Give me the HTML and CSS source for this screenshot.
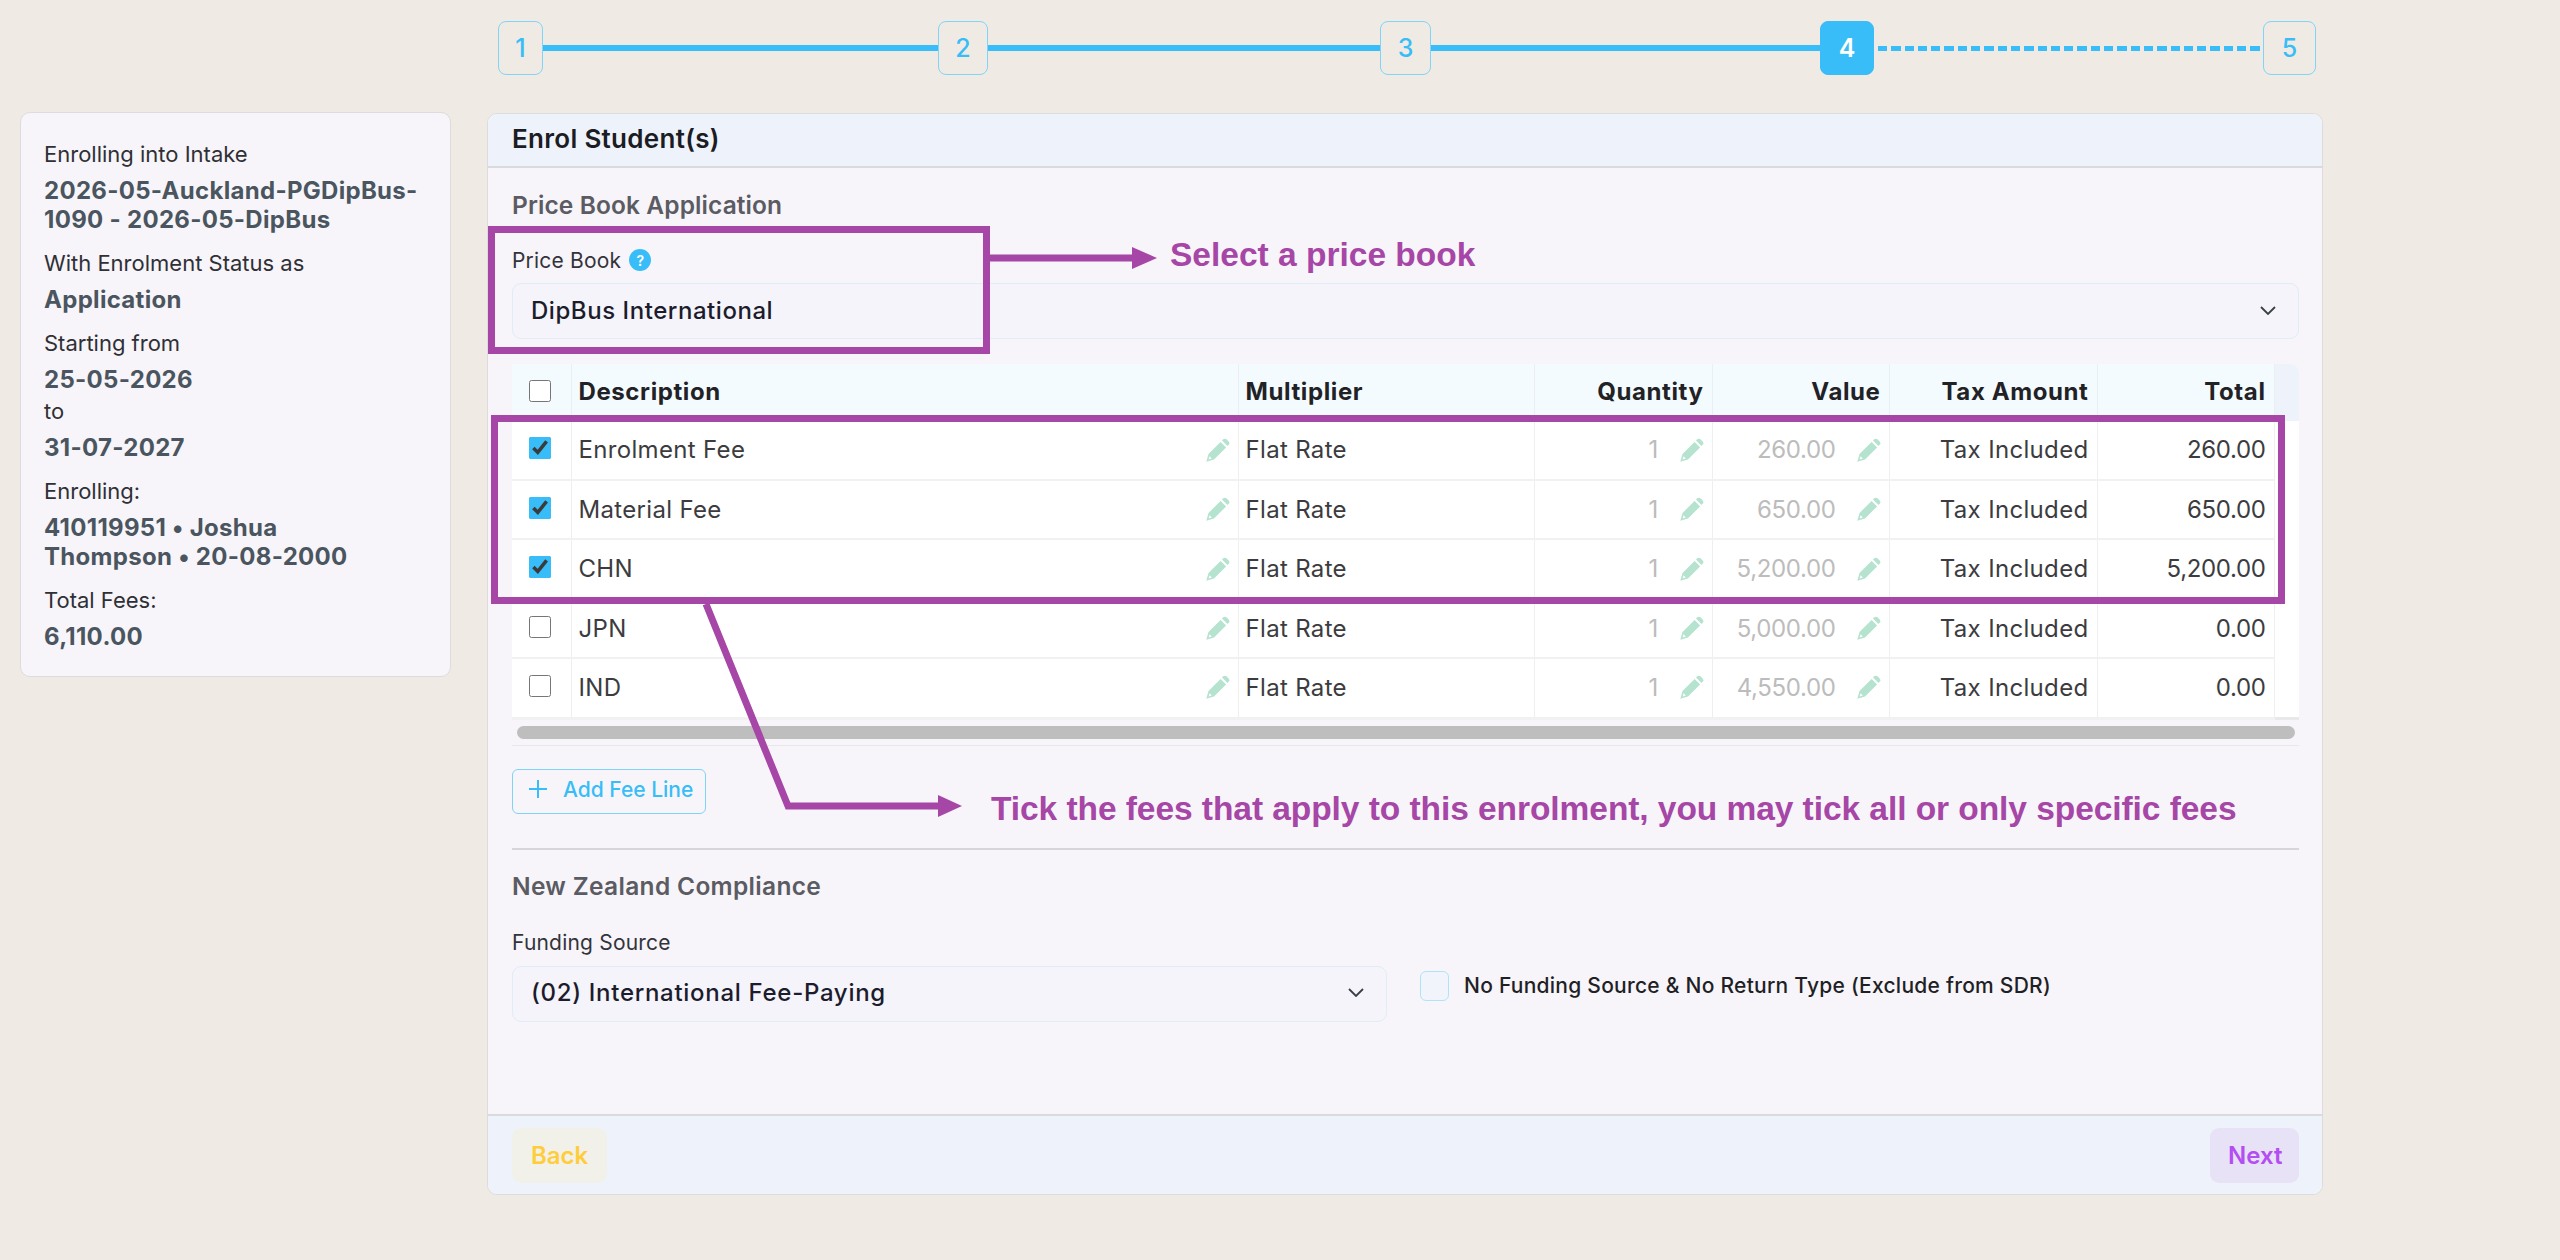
FILE: index.html
```html
<!DOCTYPE html>
<html lang="en">
<head>
<meta charset="UTF-8">
<title>Enrol Student(s)</title>
<link rel="stylesheet" href="styles.css">
</head>
<body>
    <svg class="defs" width="0" height="0">
        <symbol id="pencil" viewBox="0 0 24 24">
            <path fill-rule="evenodd" d="M14.6 3.9l5.5 5.5L8 21.5 0.3 23.7 2.5 16zM3.6 18.2l-1 3.2 3.2-1z"/>
            <path d="M16 2.5l0.9-0.9a2.8 2.8 0 0 1 3.9 0l1.6 1.6a2.8 2.8 0 0 1 0 3.9L21.5 8z"/>
        </symbol>
    </svg>

    <div class="page">
        <div class="stepper">
            <div class="step s1">1</div>
            <div class="line l1"></div>
            <div class="step s2">2</div>
            <div class="line l2"></div>
            <div class="step s3">3</div>
            <div class="line"></div>
            <div class="step active">4</div>
            <div class="line dashed"></div>
            <div class="step s5">5</div>
        </div>

        <aside class="summary">
            <p class="label">Enrolling into Intake</p>
            <p class="value">2026-05-Auckland-PGDipBus-<br>1090 - 2026-05-DipBus</p>
            <p class="label">With Enrolment Status as</p>
            <p class="value">Application</p>
            <p class="label">Starting from</p>
            <p class="value">25-05-2026</p>
            <p class="label tight">to</p>
            <p class="value">31-07-2027</p>
            <p class="label">Enrolling:</p>
            <p class="value">410119951 • Joshua<br>Thompson • 20-08-2000</p>
            <p class="label">Total Fees:</p>
            <p class="value">6,110.00</p>
        </aside>

        <main class="card">
            <div class="card-header">Enrol Student(s)</div>
            <div class="card-body">
                <h3 class="section-title">Price Book Application</h3>
                <div class="field-label first-field">Price Book <span class="help">?</span></div>
                <div class="select full">
                    <span>DipBus International</span>
                    <svg class="chevron" viewBox="0 0 16 9"><path d="M1 1l7 7 7-7"/></svg>
                </div>

                <div class="table-wrap">
                    <table class="fees">
                        <colgroup>
                            <col class="c-check"><col class="c-desc"><col class="c-mult"><col class="c-qty">
                            <col class="c-val"><col class="c-tax"><col class="c-total"><col class="c-pad">
                        </colgroup>
                        <thead>
                            <tr>
                                <th class="check"><input type="checkbox"></th>
                                <th>Description</th>
                                <th>Multiplier</th>
                                <th class="right">Quantity</th>
                                <th class="right">Value</th>
                                <th class="right">Tax Amount</th>
                                <th class="right">Total</th>
                                <th class="filler"></th>
                            </tr>
                        </thead>
                        <tbody>
                            <tr>
                                <td class="check"><input type="checkbox" checked></td>
                                <td><div class="cell">Enrolment Fee <svg class="pencil"><use href="#pencil"/></svg></div></td>
                                <td>Flat Rate</td>
                                <td><div class="cell end muted">1 <svg class="pencil"><use href="#pencil"/></svg></div></td>
                                <td><div class="cell end muted num">260.00 <svg class="pencil"><use href="#pencil"/></svg></div></td>
                                <td class="right">Tax Included</td>
                                <td class="right num">260.00</td>
                                <td class="pad"></td>
                            </tr>
                            <tr>
                                <td class="check"><input type="checkbox" checked></td>
                                <td><div class="cell">Material Fee <svg class="pencil"><use href="#pencil"/></svg></div></td>
                                <td>Flat Rate</td>
                                <td><div class="cell end muted">1 <svg class="pencil"><use href="#pencil"/></svg></div></td>
                                <td><div class="cell end muted num">650.00 <svg class="pencil"><use href="#pencil"/></svg></div></td>
                                <td class="right">Tax Included</td>
                                <td class="right num">650.00</td>
                                <td class="pad"></td>
                            </tr>
                            <tr class="tall">
                                <td class="check"><input type="checkbox" checked></td>
                                <td><div class="cell">CHN <svg class="pencil"><use href="#pencil"/></svg></div></td>
                                <td>Flat Rate</td>
                                <td><div class="cell end muted">1 <svg class="pencil"><use href="#pencil"/></svg></div></td>
                                <td><div class="cell end muted num">5,200.00 <svg class="pencil"><use href="#pencil"/></svg></div></td>
                                <td class="right">Tax Included</td>
                                <td class="right num">5,200.00</td>
                                <td class="pad"></td>
                            </tr>
                            <tr>
                                <td class="check"><input type="checkbox"></td>
                                <td><div class="cell">JPN <svg class="pencil"><use href="#pencil"/></svg></div></td>
                                <td>Flat Rate</td>
                                <td><div class="cell end muted">1 <svg class="pencil"><use href="#pencil"/></svg></div></td>
                                <td><div class="cell end muted num">5,000.00 <svg class="pencil"><use href="#pencil"/></svg></div></td>
                                <td class="right">Tax Included</td>
                                <td class="right num">0.00</td>
                                <td class="pad"></td>
                            </tr>
                            <tr class="tall">
                                <td class="check"><input type="checkbox"></td>
                                <td><div class="cell">IND <svg class="pencil"><use href="#pencil"/></svg></div></td>
                                <td>Flat Rate</td>
                                <td><div class="cell end muted">1 <svg class="pencil"><use href="#pencil"/></svg></div></td>
                                <td><div class="cell end muted num">4,550.00 <svg class="pencil"><use href="#pencil"/></svg></div></td>
                                <td class="right">Tax Included</td>
                                <td class="right num">0.00</td>
                                <td class="pad"></td>
                            </tr>
                        </tbody>
                    </table>
                    <div class="scroll-track"><div class="scroll-thumb"></div></div>
                </div>

                <button class="add-line">
                    <svg class="plus" viewBox="0 0 18 18"><path d="M9 0v18M0 9h18"/></svg>
                    Add Fee Line
                </button>

                <hr class="divider">

                <h3 class="section-title">New Zealand Compliance</h3>
                <div class="field-label">Funding Source</div>
                <div class="funding-row">
                    <div class="select half">
                        <span>(02) International Fee-Paying</span>
                        <svg class="chevron" viewBox="0 0 16 9"><path d="M1 1l7 7 7-7"/></svg>
                    </div>
                    <div class="exclude">
                        <span class="box"></span>
                        <span>No Funding Source &amp; No Return Type (Exclude from SDR)</span>
                    </div>
                </div>
            </div>
            <div class="card-footer">
                <button class="btn back">Back</button>
                <button class="btn next">Next</button>
            </div>
        </main>
    </div>

    <!-- annotations drawn on top of the screenshot -->
    <svg class="marks" width="2560" height="1260" viewBox="0 0 2560 1260">
        <rect x="491.5" y="229.5" width="495" height="121"/>
        <rect x="494.5" y="418.5" width="1787" height="182"/>
        <path d="M990 258H1135"/>
        <polygon class="head" points="1132,247 1157,258 1132,269"/>
        <path d="M706 604L788 806H940"/>
        <polygon class="head" points="938,795 962,806 938,817"/>
    </svg>
    <div class="note note-price">Select a price book</div>
    <div class="note note-fees">Tick the fees that apply to this enrolment, you may tick all or only specific fees</div>
</body>
</html>
```

FILE: styles.css
```css
body {
    margin: 0;
    position: relative;
    height: 1260px;
    overflow: hidden;
    background-color: #efebe4;
    color: #2b2b33;
    font-family: Inter, "Noto Sans", sans-serif;
    font-size: 24px;
}
p, h3 {
    margin: 0;
}
.defs {
    position: absolute;
}
.page {
    display: grid;
    grid-template-columns: 431px 1836px;
    column-gap: 36px;
    padding: 21px 0 0 20px;
}

/* stepper */
.stepper {
    grid-column: 2;
    display: flex;
    align-items: center;
    height: 54px;
    margin: 0 7px 38px 11px;
}
.step {
    box-sizing: border-box;
    height: 54px;
    display: flex;
    align-items: center;
    justify-content: center;
    border: 1px solid #80d4f7;
    border-radius: 8px;
    color: #38bdf8;
    font-size: 25px;
    font-weight: 500;
}
.s1 { width: 45px; }
.s2 { width: 50px; }
.s3 { width: 51px; }
.s5 { width: 53px; }
.step.active {
    background-color: #38bdf8;
    border-color: #38bdf8;
    color: #fff;
    font-weight: 600;
    width: 54px;
}
.line {
    flex: none;
    width: 389px;
    height: 6px;
    background-color: #38bdf8;
}
.line.l1 { width: 395px; }
.line.l2 { width: 392px; }
.line.dashed {
    height: 5px;
    background: repeating-linear-gradient(to right, transparent 0, transparent 4px, #38bdf8 4px, #38bdf8 13.3px);
}

/* left summary */
.summary {
    grid-column: 1;
    grid-row: 2;
    align-self: start;
    box-sizing: border-box;
    height: 565px;
    margin-top: -1px;
    padding: 26px 23px;
    background-color: #f7f5f9;
    border: 1px solid #dcdcdf;
    border-radius: 10px;
}
.label {
    font-size: 22px;
    line-height: 30px;
    margin-top: 14px;
    color: #2f3036;
}
.label:first-child {
    margin-top: 0;
}
.label.tight {
    margin-top: 2px;
}
.value {
    font-size: 24px;
    line-height: 29px;
    margin-top: 7px;
    font-weight: 700;
    letter-spacing: .3px;
    color: #4a5560;
}

/* main card */
.card {
    grid-column: 2;
    grid-row: 2;
    box-sizing: border-box;
    height: 1082px;
    display: flex;
    flex-direction: column;
    background-color: #f7f5f9;
    border: 1px solid #dcdcdf;
    border-radius: 10px;
    overflow: hidden;
}
.card-header {
    box-sizing: border-box;
    height: 54px;
    padding: 0 0 3px 24px;
    display: flex;
    align-items: center;
    flex: none;
    background-color: #eef3fb;
    border-bottom: 2px solid #d9dade;
    font-weight: 600;
    font-size: 26px;
    letter-spacing: .3px;
    color: #1c1c24;
}
.card-body {
    flex: 1;
    padding: 0 23px 0 24px;
}
.section-title {
    font-size: 24.5px;
    letter-spacing: .1px;
    font-weight: 600;
    color: #5b5b63;
    line-height: 30px;
    margin-top: 22px;
}
.divider + .section-title {
    margin-top: 21px;
    letter-spacing: .32px;
}
.field-label {
    display: flex;
    align-items: center;
    gap: 8px;
    height: 30px;
    margin-top: 27px;
    font-size: 21px;
    letter-spacing: .2px;
    color: #33333b;
}
.field-label.first-field {
    margin-top: 25px;
}
.help {
    width: 22px;
    height: 22px;
    border-radius: 50%;
    background-color: #38bdf8;
    color: #fff;
    font-size: 14px;
    font-weight: 600;
    display: flex;
    align-items: center;
    justify-content: center;
}
.select {
    box-sizing: border-box;
    height: 56px;
    display: flex;
    align-items: center;
    justify-content: space-between;
    padding: 0 22px 2px 18px;
    margin-top: 8px;
    background-color: #f4f4fa;
    border: 1px solid #e0edf6;
    border-radius: 9px;
    font-weight: 500;
    letter-spacing: .55px;
    color: #1c1c2c;
}
.select.half {
    width: 875px;
    margin-top: 0;
    letter-spacing: .7px;
}
.chevron {
    width: 16px;
    height: 9px;
    fill: none;
    stroke: #3a3f47;
    stroke-width: 1.8;
}

/* fee table */
.table-wrap {
    margin-top: 25px;
    background-color: #fff;
    border-radius: 0 8px 0 0;
    overflow: hidden;
    border-bottom: 1px solid #e8e8ea;
}
.fees {
    width: 100%;
    table-layout: fixed;
    border-collapse: collapse;
}
.c-check { width: 59px; }
.c-desc { width: 667px; }
.c-mult { width: 296px; }
.c-qty { width: 178px; }
.c-val { width: 177px; }
.c-tax { width: 208px; }
.c-total { width: 177px; }
.fees th {
    height: 57px;
    padding: 0 8px 2px 7px;
    box-sizing: border-box;
    background-color: #f3fbfe;
    border-right: 1px solid #e9eff2;
    text-align: left;
    font-weight: 700;
    font-size: 24px;
    letter-spacing: .6px;
    color: #222226;
}
.fees th.filler {
    background-color: #eef3fb;
    border-right: none;
}
.fees th.right,
.fees td.right {
    text-align: right;
}
.fees td {
    height: 59px;
    box-sizing: border-box;
    padding: 0 8px 1px 7px;
    border-right: 1px solid #efefef;
    border-bottom: 2px solid #f1f1f1;
    letter-spacing: .33px;
    color: #3c3c40;
}
.fees tr.tall td {
    height: 60px;
}
.fees td.pad {
    border: none;
}
.fees tbody tr:last-child td {
    border-bottom-width: 3px;
}
.fees tbody tr:last-child td.pad {
    border-bottom: 3px solid #e8e8ea;
}
.fees .check {
    padding: 0 0 0 17px;
}
.check input {
    display: block;
    width: 22px;
    height: 22px;
    margin: 0 0 4px;
    accent-color: #38bdf8;
}
.cell {
    display: flex;
    align-items: center;
    justify-content: space-between;
}
.cell.end {
    justify-content: flex-end;
    gap: 21px;
}
.fees .num {
    letter-spacing: -.35px;
}
.muted {
    color: #bcbcbc;
}
.pencil {
    width: 24px;
    height: 24px;
    fill: #b5e3cf;
    flex: none;
}
.scroll-track {
    height: 25px;
    padding: 6px 4px 0 5px;
    box-sizing: border-box;
    background-color: #f7f5f9;
}
.scroll-thumb {
    height: 13px;
    border-radius: 7px;
    background-color: #bebebe;
}

.add-line {
    display: flex;
    align-items: center;
    gap: 16px;
    box-sizing: border-box;
    width: 194px;
    height: 45px;
    margin-top: 23px;
    padding: 0 0 4px 16px;
    background: none;
    border: 1px solid #7fd3f7;
    border-radius: 6px;
    color: #38bdf8;
    font-family: inherit;
    font-size: 21px;
    font-weight: 500;
    white-space: nowrap;
}
.plus {
    width: 18px;
    height: 18px;
    fill: none;
    stroke: #38bdf8;
    stroke-width: 2;
    flex: none;
}
.divider {
    margin: 34px 0 0;
    border: none;
    border-top: 2px solid #d6d6d9;
}
.funding-row {
    display: flex;
    gap: 33px;
    margin-top: 8px;
}
.exclude {
    display: flex;
    align-items: center;
    gap: 15px;
    height: 40px;
    font-size: 21px;
    font-weight: 500;
    letter-spacing: .25px;
    color: #1f1f26;
}
.box {
    box-sizing: border-box;
    width: 29px;
    height: 30px;
    border: 1px solid #b0e3f8;
    border-radius: 6px;
    background-color: #f1f5fb;
}

.card-footer {
    flex: none;
    box-sizing: border-box;
    height: 80px;
    display: flex;
    justify-content: space-between;
    align-items: center;
    padding: 0 23px 0 24px;
    background-color: #eef3fb;
    border-top: 2px solid #d9dade;
}
.btn {
    height: 55px;
    padding: 0 18px;
    border: none;
    border-radius: 9px;
    font-family: inherit;
    font-size: 24px;
    font-weight: 600;
}
.btn.back {
    width: 95px;
    background-color: #f1f1ea;
    color: #ffcd3c;
}
.btn.next {
    width: 89px;
    background-color: #e8e2f6;
    color: #b44df2;
}

/* annotations */
.marks {
    position: absolute;
    left: 0;
    top: 0;
    fill: none;
    stroke: #a646a6;
    stroke-width: 7;
}
.marks .head {
    fill: #a646a6;
    stroke: none;
}
.note {
    position: absolute;
    font-family: "Liberation Sans", Arial, sans-serif;
    font-weight: 700;
    font-size: 33.5px;
    line-height: 40px;
    color: #a646a6;
    white-space: nowrap;
}
.note-price {
    left: 1170px;
    top: 235px;
}
.note-fees {
    left: 991px;
    top: 789px;
    letter-spacing: -.06px;
}
```
